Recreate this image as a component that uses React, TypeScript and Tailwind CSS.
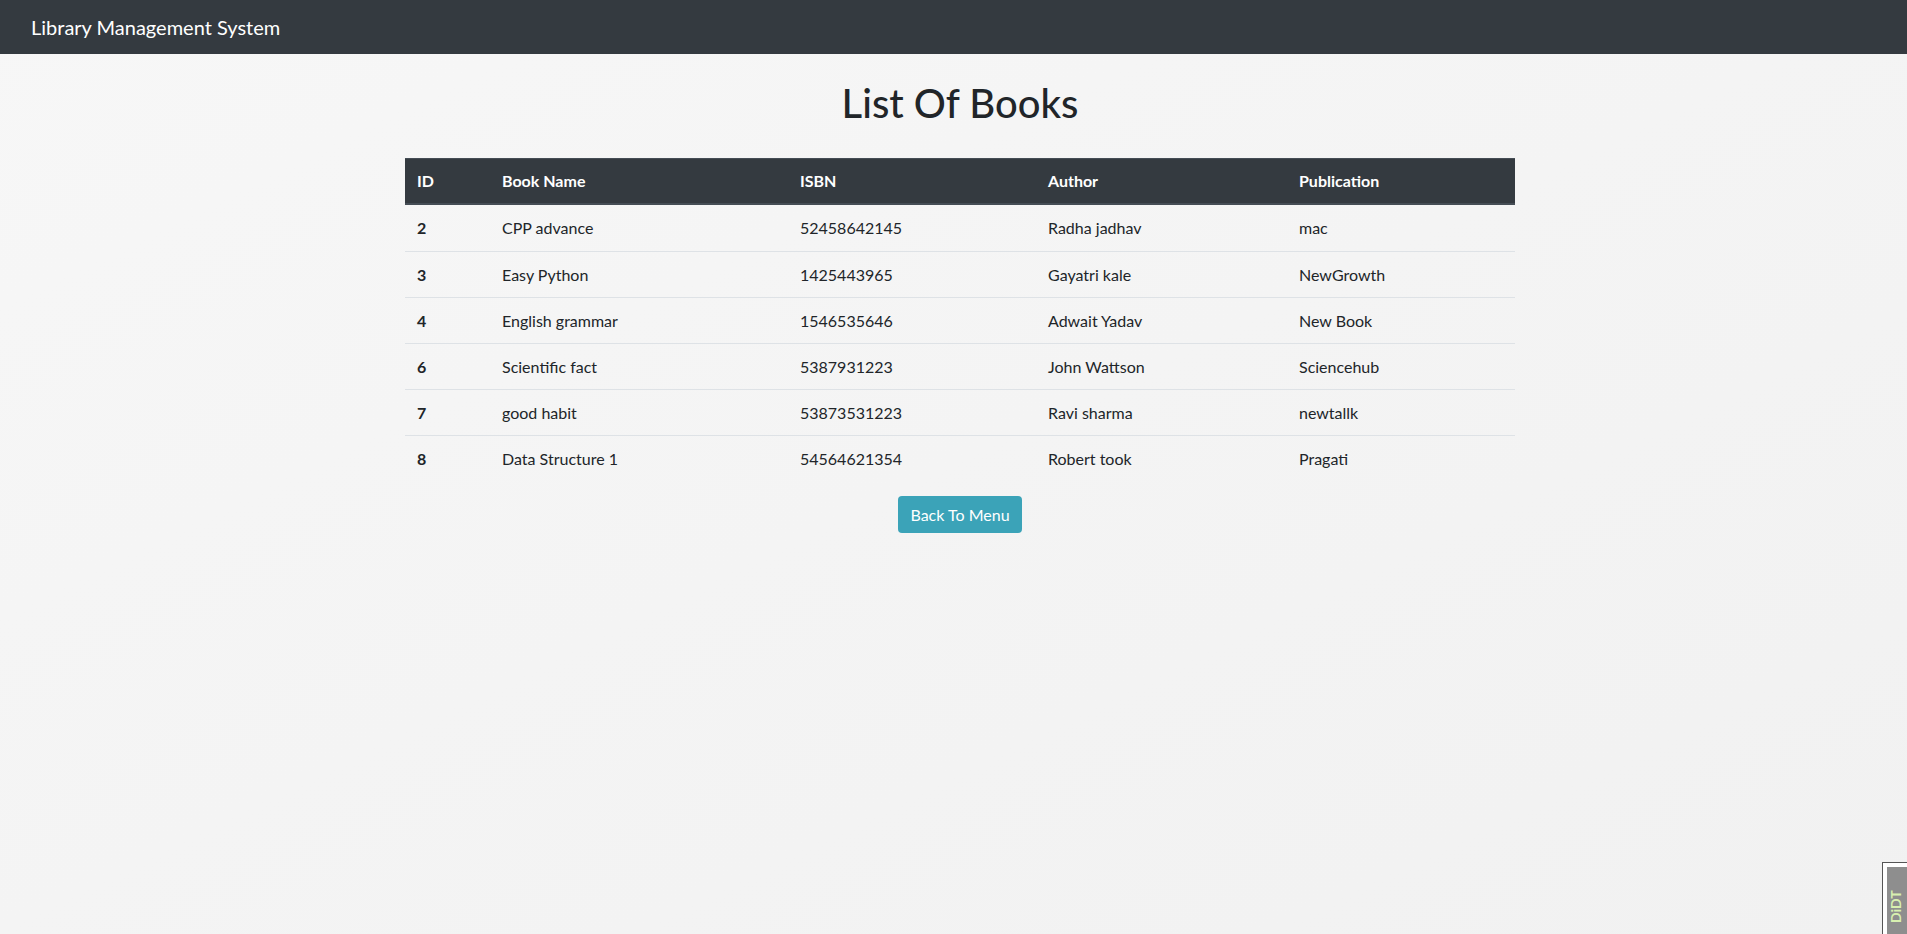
import React from 'react'

type Book = {
  id: number
  name: string
  isbn: string
  author: string
  publication: string
}

const books: Book[] = [
  { id: 2, name: 'CPP advance', isbn: '52458642145', author: 'Radha jadhav', publication: 'mac' },
  { id: 3, name: 'Easy Python', isbn: '1425443965', author: 'Gayatri kale', publication: 'NewGrowth' },
  { id: 4, name: 'English grammar', isbn: '1546535646', author: 'Adwait Yadav', publication: 'New Book' },
  { id: 6, name: 'Scientific fact', isbn: '5387931223', author: 'John Wattson', publication: 'Sciencehub' },
  { id: 7, name: 'good habit', isbn: '53873531223', author: 'Ravi sharma', publication: 'newtallk' },
  { id: 8, name: 'Data Structure 1', isbn: '54564621354', author: 'Robert took', publication: 'Pragati' },
]

const cols = 'grid grid-cols-[85px_298px_248px_251px_228px]'

export default function App() {
  return (
    <div
      className="relative min-h-[934px] overflow-hidden bg-gradient-to-br from-[#f7f7f7] to-[#f1f1f1] text-[#212529]"
      style={{ fontFamily: 'Lato, "Open Sans", sans-serif' }}
    >
      {/* navbar */}
      <nav className="flex h-[54px] items-center bg-[#343a40] px-[31px]">
        <span className="text-[20px] text-white">Library Management System</span>
      </nav>

      <div className="pl-[13px]">
        <div className="mx-auto w-[1110px]">
          <h1 className="mt-[25px] text-center text-[40px] leading-[48px] font-medium">List Of Books</h1>

          {/* table */}
          <div className="mt-[31px] text-[16px]">
            <div className={`${cols} h-[47px] items-center border-t border-b-2 border-[#454d55] bg-[#343a40] font-bold text-white`}>
              <div className="px-3">ID</div>
              <div className="px-3">Book Name</div>
              <div className="px-3">ISBN</div>
              <div className="px-3">Author</div>
              <div className="px-3">Publication</div>
            </div>
            {books.map((b, i) => (
              <div
                key={b.id}
                className={`${cols} h-[46px] items-center ${i > 0 ? 'border-t border-[#dee2e6]' : ''}`}
              >
                <div className="px-3 font-bold">{b.id}</div>
                <div className="px-3">{b.name}</div>
                <div className="px-3">{b.isbn}</div>
                <div className="px-3">{b.author}</div>
                <div className="px-3">{b.publication}</div>
              </div>
            ))}
          </div>

          <div className="mt-[15px] flex justify-center">
            <button className="h-[37px] w-[124px] rounded-[4px] bg-[#3ba3b8] text-[16px] text-white">
              Back To Menu
            </button>
          </div>
        </div>
      </div>

      {/* browser extension badge in the corner */}
      <div className="absolute top-[862px] left-[1882px] h-[80px] w-[30px] border border-[#555] bg-white p-[4px] pr-0">
        <div className="h-full w-full bg-[#8e8e8e]">
          <span className="block origin-top-left translate-x-[2px] translate-y-[56px] -rotate-90 text-[14px] leading-none font-bold text-[#d8f0b0]">
            DiDT
          </span>
        </div>
      </div>
    </div>
  )
}
